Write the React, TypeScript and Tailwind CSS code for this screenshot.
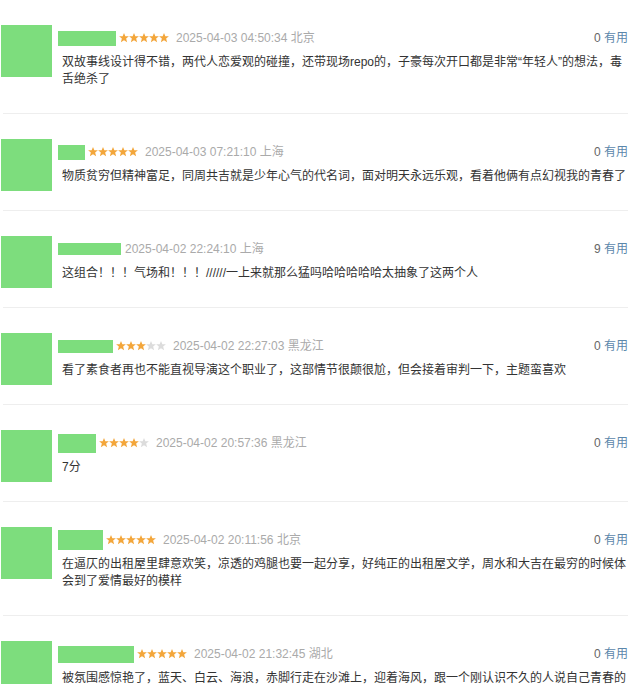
type Review = {
  nameW: string;
  nameH: string;
  stars: number | null;
  time: string;
  place: string;
  useful: number;
  text: string;
};

const reviews: Review[] = [
  {
    nameW: "w-[58px]",
    nameH: "h-[15px]",
    stars: 5,
    time: "2025-04-03 04:50:34",
    place: "北京",
    useful: 0,
    text: "双故事线设计得不错，两代人恋爱观的碰撞，还带现场repo的，子豪每次开口都是非常“年轻人”的想法，毒舌绝杀了",
  },
  {
    nameW: "w-[27px]",
    nameH: "h-[15px]",
    stars: 5,
    time: "2025-04-03 07:21:10",
    place: "上海",
    useful: 0,
    text: "物质贫穷但精神富足，同周共吉就是少年心气的代名词，面对明天永远乐观，看着他俩有点幻视我的青春了",
  },
  {
    nameW: "w-[63px]",
    nameH: "h-[12px]",
    stars: null,
    time: "2025-04-02 22:24:10",
    place: "上海",
    useful: 9,
    text: "这组合！！！气场和！！！//////一上来就那么猛吗哈哈哈哈哈太抽象了这两个人",
  },
  {
    nameW: "w-[55px]",
    nameH: "h-[13px]",
    stars: 3,
    time: "2025-04-02 22:27:03",
    place: "黑龙江",
    useful: 0,
    text: "看了素食者再也不能直视导演这个职业了，这部情节很颠很尬，但会接着审判一下，主题蛮喜欢",
  },
  {
    nameW: "w-[38px]",
    nameH: "h-[19px]",
    stars: 4,
    time: "2025-04-02 20:57:36",
    place: "黑龙江",
    useful: 0,
    text: "7分",
  },
  {
    nameW: "w-[45px]",
    nameH: "h-[20px]",
    stars: 5,
    time: "2025-04-02 20:11:56",
    place: "北京",
    useful: 0,
    text: "在逼仄的出租屋里肆意欢笑，凉透的鸡腿也要一起分享，好纯正的出租屋文学，周水和大吉在最穷的时候体会到了爱情最好的模样",
  },
  {
    nameW: "w-[76px]",
    nameH: "h-[17px]",
    stars: 5,
    time: "2025-04-02 21:32:45",
    place: "湖北",
    useful: 0,
    text: "被氛围感惊艳了，蓝天、白云、海浪，赤脚行走在沙滩上，迎着海风，跟一个刚认识不久的人说自己青春的故事，真的很美好",
  },
];

function Star({ on }: { on: boolean }) {
  return (
    <svg width="10" height="10" viewBox="0 0 10 10" className="shrink-0">
      <polygon
        points="5,0 6.35,3.15 9.9,3.3 7.15,5.55 8.1,9.3 5,7.3 1.9,9.3 2.85,5.55 0.1,3.3 3.65,3.15"
        fill={on ? "#f3a63b" : "#dcdcdc"}
      />
    </svg>
  );
}

function ReviewItem({ r, first }: { r: Review; first: boolean }) {
  return (
    <div
      className={
        first
          ? "flex pt-[25px] pb-[18px]"
          : "flex border-t border-[#eeeeee] pt-[25px] pb-[18px]"
      }
    >
      <div className="ml-[-2px] h-[52px] w-[51px] shrink-0 bg-[#7ddd7d]" />
      <div className="ml-[6px] flex min-w-0 flex-1 flex-col pb-[7px]">
        <div className="flex h-[26px] items-center text-[12px]">
          <div className={`${r.nameW} ${r.nameH} shrink-0 bg-[#7ddd7d]`} />
          {r.stars !== null && (
            <div className="ml-[3px] flex">
              {[0, 1, 2, 3, 4].map((i) => (
                <Star key={i} on={i < (r.stars ?? 0)} />
              ))}
            </div>
          )}
          <span
            className={
              r.stars !== null
                ? "ml-[7px] text-[#aaaaaa]"
                : "ml-[4px] text-[#aaaaaa]"
            }
          >
            {r.time} {r.place}
          </span>
          <span className="ml-auto text-[#666666]">
            {r.useful} <span className="text-[#5b87ab]">有用</span>
          </span>
        </div>
        <p className="mt-[3px] pl-[4px] text-[12px] leading-[17px] text-[#333333]">
          {r.text}
        </p>
      </div>
    </div>
  );
}

export default function App() {
  return (
    <div className="h-[684px] w-[640px] overflow-hidden bg-white font-['Liberation_Sans','Noto_Sans_CJK_SC',sans-serif]">
      <div className="ml-[3px] w-[625px]">
        {reviews.map((r, i) => (
          <ReviewItem key={i} r={r} first={i === 0} />
        ))}
      </div>
    </div>
  );
}
